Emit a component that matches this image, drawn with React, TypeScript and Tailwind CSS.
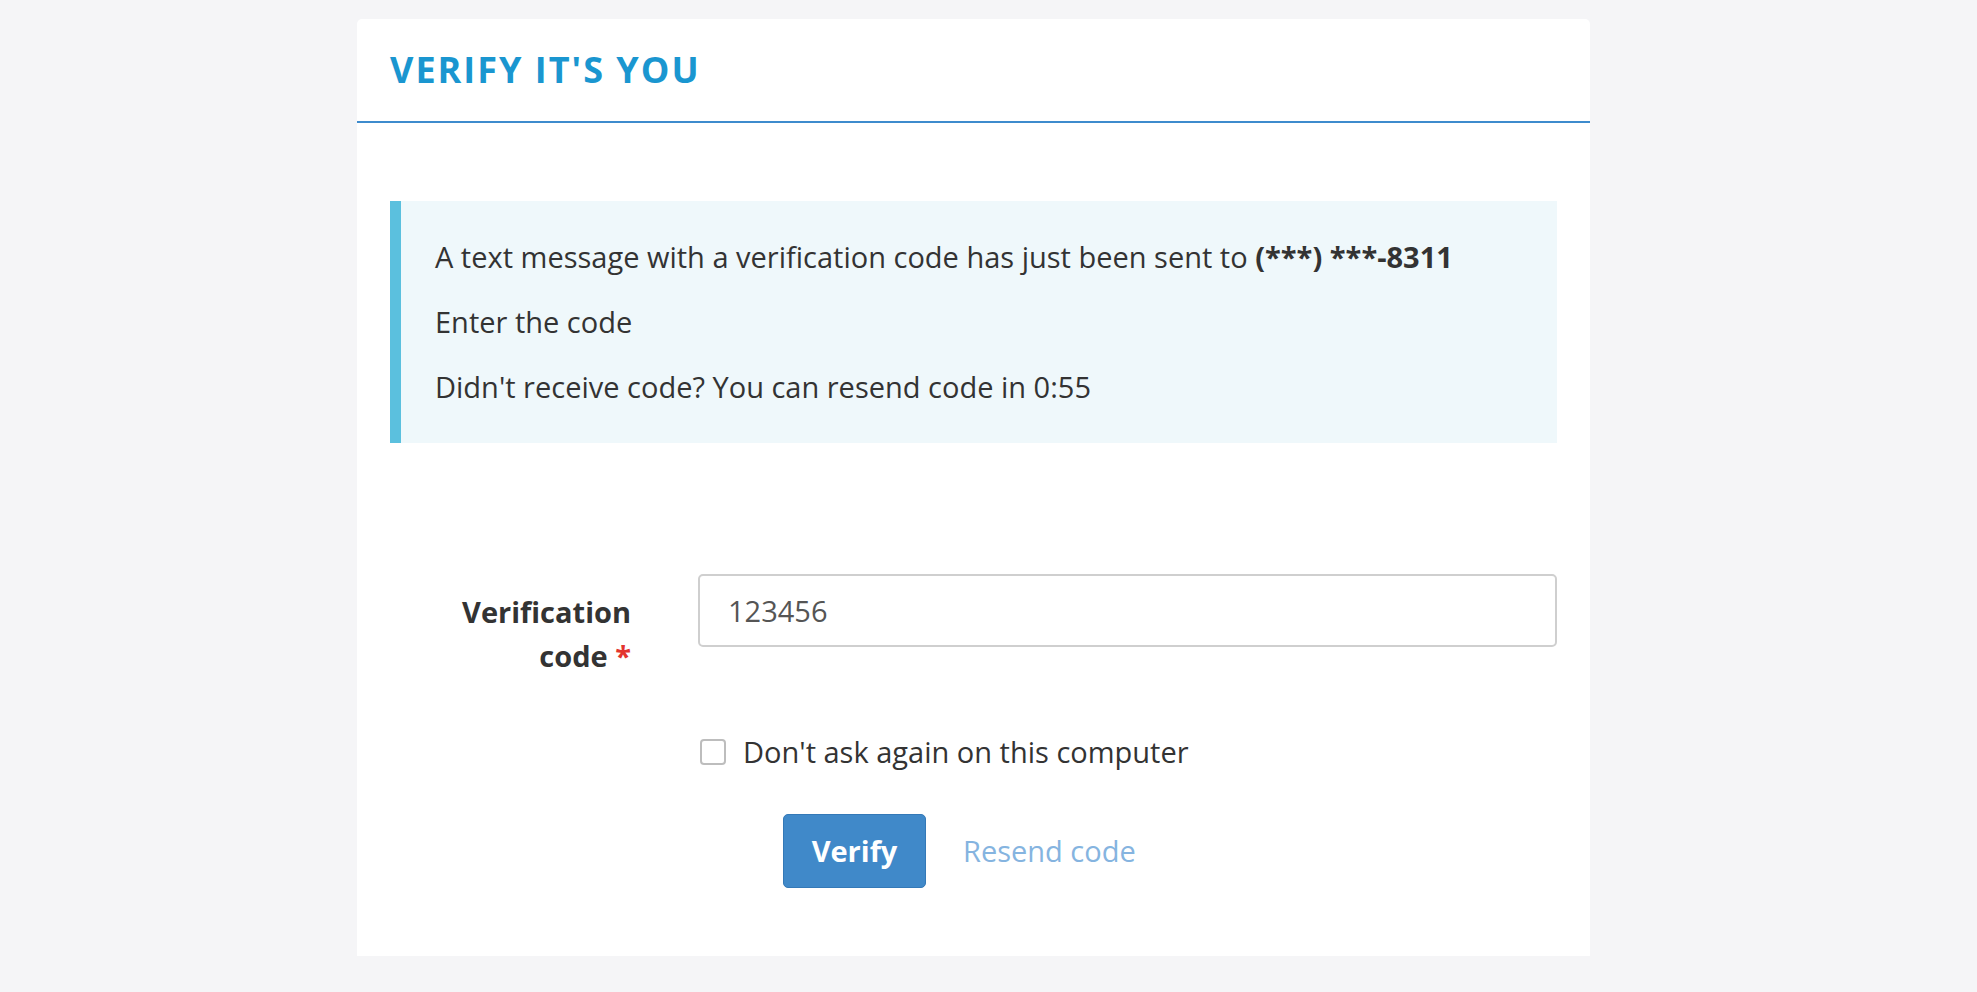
import React, { useState } from "react";

export default function App() {
    const [code, setCode] = useState("123456");
    const [remember, setRemember] = useState(false);

    return (
        <div className="min-h-screen bg-[#f5f5f7] pt-[19px] pb-[36px] text-[#333]" style={{ fontFamily: '"Open Sans", "Liberation Sans", sans-serif' }}>
            <div className="ml-[357px] w-[1233px] bg-white rounded-t-[5px]">
                <div className="h-[102px] flex items-center pl-[33px] border-b-2 border-[#3d8bcd] box-content">
                    <h1 className="text-[36px] font-bold tracking-[2px] text-[#1a96d0] leading-none">VERIFY IT'S YOU</h1>
                </div>

                <div className="px-[33px] pt-[78px] pb-[68px]">
                    <div className="w-full bg-[#eff8fb] border-l-[11px] border-[#5bc0de] pl-[34px] pt-[36px] pb-[36px] text-[29px] leading-[40px] flex flex-col gap-y-[25px]">
                        <p>A text message with a verification code has just been sent to <b>(***) ***-8311</b></p>
                        <p>Enter the code</p>
                        <p>Didn't receive code? You can resend code in 0:55</p>
                    </div>

                    <div className="mt-[131px] flex items-start gap-x-[67px]">
                        <label className="w-[241px] pt-[16px] pl-[30px] text-right text-[29px] leading-[44px] font-bold">
                            Verification code <span className="text-[#e3342f]">*</span>
                        </label>
                        <input
                            value={code}
                            onChange={e => setCode(e.target.value)}
                            className="w-[859px] h-[73px] border-2 border-[#cfcfcf] rounded-[5px] px-[28px] text-[29px] text-[#555] outline-none"
                        />
                    </div>

                    <label className="mt-[54px] ml-[310px] flex items-center gap-x-[17px] text-[29px] leading-[40px] cursor-pointer w-max">
                        <span
                            onClick={() => setRemember(!remember)}
                            className={"w-[26px] h-[26px] rounded-[4px] border-2 border-[#bdbdbd] " + (remember ? "bg-[#3f88c8]" : "bg-white")}
                        />
                        Don't ask again on this computer
                    </label>

                    <div className="mt-[42px] ml-[393px] flex items-center gap-x-[37px]">
                        <button className="w-[143px] h-[74px] rounded-[5px] bg-[#4089c9] border border-[#3479b7] text-white text-[29px] font-bold">Verify</button>
                        <a href="#" className="text-[29px] text-[#85b4e0]">Resend code</a>
                    </div>
                </div>
            </div>
        </div>
    );
}
